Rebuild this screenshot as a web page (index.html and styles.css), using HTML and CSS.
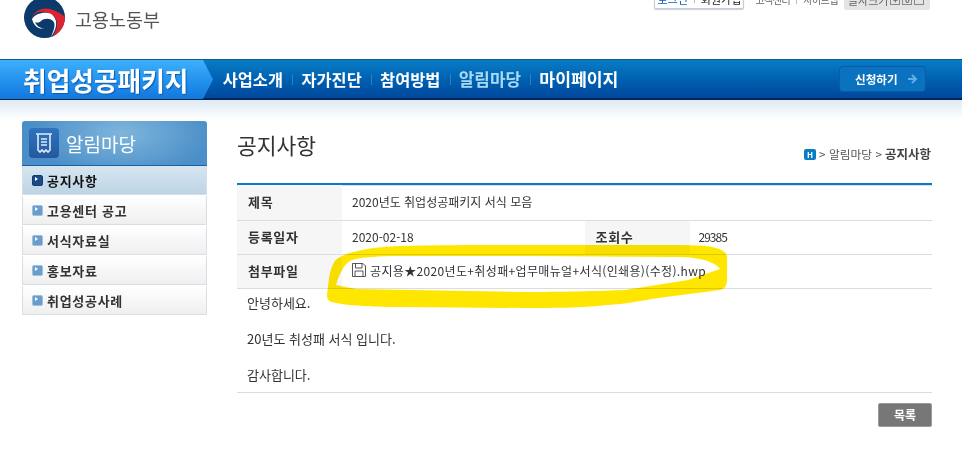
FILE: index.html
```html
<!DOCTYPE html>
<html lang="ko">
<head>
    <meta charset="UTF-8">
    <meta name="viewport" content="width=device-width, initial-scale=1.0">
    <title>공지사항 - 취업성공패키지</title>
    <link rel="stylesheet" href="styles.css">
</head>
<body>
    <header class="top">
        <div class="logo">
            <svg class="logo-mark" width="50" height="42" viewBox="0 0 50 42">
                <circle cx="24.5" cy="17.5" r="20.5" fill="#0b3a6b"/>
                <path d="M11.5 18C14 11 22 7 30 9C37 11 42 14 45 17C45 26 40 33 32 37C37 31 38 24 36 19C33 13 25 11 19 12C15 13 13 15 11.5 18Z" fill="#e0222f"/>
                <path d="M12 19C15 14 22 12 28 13C34 14 37 20 36 26C35 31 33 34 31 37C34 30 36 24 33 21C30 18 24 18 21 21C19 23 16 23 15 22C17 27 22 29 25 28C20 30 14 27 12 19Z" fill="#fff"/>
            </svg>
            <span class="logo-text">고용노동부</span>
        </div>
        <div class="util">
            <div class="login-box"><a class="login" href="#">로그인</a><i></i><a href="#">회원가입</a></div>
            <div class="util-links"><a href="#">고객센터</a><i></i><a href="#">사이트맵</a></div>
            <div class="font-size">글자크기 <b>+</b><b>0</b><b>-</b></div>
        </div>
    </header>

    <div class="gnb">
        <div class="brand">취업성공패키지</div>
        <ul class="menu">
            <li>사업소개</li>
            <li>자가진단</li>
            <li>참여방법</li>
            <li class="on">알림마당</li>
            <li class="mypage">마이페이지</li>
        </ul>
        <a class="apply" href="#">신청하기
            <svg width="10" height="12" viewBox="0 0 10 12"><path d="M0 6H8M4 2L8 6L4 10" fill="none" stroke="#5fb0e4" stroke-width="2"/></svg>
        </a>
    </div>

    <div class="content">
        <aside class="side">
            <div class="side-title">
                <span class="side-icon">
                    <svg width="20" height="22" viewBox="0 0 20 22">
                        <path d="M2 2H18M4 2V18L6 20L8 18L10 20L12 18L14 20L16 18V2M7 7H13M7 10H13M7 13H13" fill="none" stroke="#dcebf8" stroke-width="1.6"/>
                    </svg>
                </span>
                <span>알림마당</span>
            </div>
            <ul class="side-menu">
                <li class="on">공지사항</li>
                <li>고용센터 공고</li>
                <li>서식자료실</li>
                <li>홍보자료</li>
                <li>취업성공사례</li>
            </ul>
        </aside>

        <main class="main">
            <div class="title-row">
                <h2>공지사항</h2>
                <div class="path"><span class="home">H</span> &gt; 알림마당 &gt; <strong>공지사항</strong></div>
            </div>
            <table class="view">
                <colgroup>
                    <col class="col-th">
                    <col class="col-td">
                    <col class="col-th">
                    <col class="col-td">
                </colgroup>
                <tr class="first">
                    <th>제목</th>
                    <td colspan="3">2020년도 취업성공패키지 서식 모음</td>
                </tr>
                <tr>
                    <th>등록일자</th>
                    <td>2020-02-18</td>
                    <th>조회수</th>
                    <td class="hit">29385</td>
                </tr>
                <tr>
                    <th>첨부파일</th>
                    <td colspan="3">
                        <span class="file">
                            <svg width="14" height="14" viewBox="0 0 14 14">
                                <path d="M.5.5H11L13.5 3V13.5H.5ZM3.5.5V5H10V.5M3 13.5V8H11V13.5" fill="#fff" stroke="#555"/>
                            </svg>
                            공지용★2020년도+취성패+업무매뉴얼+서식(인쇄용)(수정).hwp
                        </span>
                    </td>
                </tr>
            </table>
            <div class="body-text">
                <p>안녕하세요.</p>
                <p>20년도 취성패 서식 입니다.</p>
                <p>감사합니다.</p>
            </div>
            <div class="btn-row">
                <a class="btn" href="#">목록</a>
            </div>
        </main>
    </div>

    <!-- 형광펜 표시 -->
    <svg class="marker" width="962" height="452" viewBox="0 0 962 452">
        <path fill="#ffe600" fill-rule="evenodd" d="M400 246C440 245 480 245 527 245L658 245C680 245 702 245 712 247C722 249 727 252 727 258L727 280C727 285 725 289 720 290L658 298C640 301 625 304 608 305C580 308 550 308 525 308L400 307C380 307 350 306 336 303C329 302 327 300 327 295L329 278C331 268 333 262 337 259C346 252 370 247 400 246ZM400 256C380 256 362 257 352 260C344 263 339 275 336 285C345 287 352 288 357 289L525 292C560 292 600 291 625 290L688 280L720 269C718 266 716 265 712 263C702 258 690 257 675 257L525 256Z"/>
    </svg>
</body>
</html>
```

FILE: styles.css
```css
* {
    box-sizing: border-box;
}

html, body {
    height: 452px;
    overflow: hidden;
}

body {
    position: relative;
    margin: 0;
    padding: 0;
    background-color: #fff;
    color: #333;
    font-family: "Noto Sans CJK KR", "Noto Sans", sans-serif;
    font-size: 12px;
}

a {
    color: inherit;
    text-decoration: none;
}

ul {
    list-style-type: none;
    margin: 0;
    padding: 0;
}

/* top */
.top {
    display: flex;
    justify-content: space-between;
    height: 59px;
    padding: 0 32px 0 20px;
    overflow: hidden;
}

.logo {
    display: flex;
    align-items: flex-start;
    gap: 5px;
    height: 42px;
}

.logo-text {
    color: #555;
    font-size: 18.5px;
    line-height: 38px;
}

.util {
    display: flex;
    align-items: flex-end;
    height: 10px;
    font-size: 11px;
    line-height: 14px;
    color: #666;
}

.util i {
    width: 1px;
    height: 8px;
    margin: 0 6px;
    background-color: #bbb;
}

.login-box {
    display: flex;
    align-items: center;
    width: 90px;
    height: 20px;
    margin-bottom: 1px;
    justify-content: center;
    background-color: #fff;
    border: 1px solid #c4ccd6;
    border-radius: 2px;
    color: #222;
    box-shadow: 0 1px 1px #ccd;
}

.login {
    color: #0a5fb0;
}

.util-links {
    display: flex;
    align-items: center;
    height: 20px;
    margin: 0 6px 0 11px;
    font-size: 10px;
    letter-spacing: -.5px;
}

.font-size {
    display: flex;
    align-items: center;
    gap: 2px;
    width: 86px;
    height: 20px;
    padding-left: 4px;
    background-color: #e4e4e4;
    border-radius: 2px;
}

.font-size b {
    width: 10px;
    height: 10px;
    border: 1px solid #888;
    font-size: 8px;
    line-height: 8px;
    text-align: center;
}

/* gnb */
.gnb {
    display: flex;
    align-items: center;
    height: 41px;
    padding-right: 36px;
    background: linear-gradient(#0a7cc4, #0064b4 45%, #004a9e 95%);
    border-top: 1px solid #0a5a9c;
    border-bottom: 2px solid #03245a;
}

.brand {
    align-self: stretch;
    width: 213px;
    margin-bottom: -1px;
    padding-left: 23px;
    background: linear-gradient(#3fb0fb, #1f8eec 60%, #1477dc);
    clip-path: polygon(0 0, 203px 0, 213px 50%, 203px 100%, 0 100%);
    color: #fff;
    font-size: 25.7px;
    font-weight: 700;
    line-height: 40px;
    text-shadow: 1px 1px 1px #0c5ab0;
    white-space: nowrap;
}

.menu {
    display: flex;
    flex: 1;
    margin-left: .5px;
    color: #fff;
    font-size: 16.4px;
    font-weight: 700;
}

.menu li {
    position: relative;
    padding: 0 9.2px;
    line-height: 22px;
}

.menu li + li::before {
    content: "";
    position: absolute;
    left: 0;
    top: 6px;
    width: 1px;
    height: 11px;
    background-color: #2f7fbe;
}

.menu .on {
    color: #a9daf4;
    font-size: 16.9px;
}

.menu .mypage {
    font-size: 17.2px;
}

.apply {
    display: flex;
    align-items: center;
    gap: 10px;
    width: 87px;
    height: 26px;
    padding-left: 15px;
    background-color: #0a72bf;
    border: 1px solid #0a5aa8;
    border-radius: 4px;
    color: #fff;
    font-size: 11.6px;
    font-weight: 700;
    white-space: nowrap;
}

/* content */
.content {
    display: flex;
    gap: 30px;
    padding: 21px 30px 0 22px;
    background: linear-gradient(#dfeaf3, #fff 20px) no-repeat;
}

.side {
    width: 185px;
}

.side-title {
    display: flex;
    align-items: center;
    gap: 7px;
    height: 45px;
    padding-left: 7px;
    background: radial-gradient(ellipse 90px 44px at 100px 12px, #7fb5dc, #4a8fc8);
    border-bottom: 1px solid #1c5ea8;
    border-radius: 3px 3px 0 0;
    color: #fff;
    font-size: 19px;
}

.side-icon {
    display: flex;
    align-items: center;
    justify-content: center;
    width: 30px;
    height: 30px;
    background: linear-gradient(#2f73bf, #24599f);
    border-radius: 4px;
}

.side-menu li {
    display: flex;
    align-items: center;
    height: 29px;
    margin-bottom: 1px;
    padding-left: 24px;
    position: relative;
    background: linear-gradient(#fff, #efefef);
    border: 1px solid #d8dee7;
    border-top: 0;
    color: #333;
    font-size: 13px;
    font-weight: 700;
    letter-spacing: .7px;
}

.side-menu li::before {
    content: "";
    position: absolute;
    left: 9px;
    top: 9px;
    width: 9px;
    height: 9px;
    background-color: #6a9ccc;
    border: 1px solid #9cc0de;
    border-radius: 2px;
}

.side-menu li::after {
    content: "";
    position: absolute;
    left: 12px;
    top: 11px;
    border-left: 3px solid #fff;
    border-top: 2.5px solid transparent;
    border-bottom: 2.5px solid transparent;
}

.side-menu .on {
    background: linear-gradient(#d7e6f1, #bcd4e4);
    color: #111;
}

.side-menu .on::before {
    background-color: #1a4a8a;
    border-color: #143c74;
}

.main {
    width: 695px;
}

.title-row {
    display: flex;
    justify-content: space-between;
    height: 62px;
}

h2 {
    margin: 0;
    color: #333;
    font-size: 21.5px;
    font-weight: 400;
    line-height: 47px;
}

.path {
    display: flex;
    align-items: center;
    gap: 3px;
    align-self: flex-end;
    margin-bottom: 21px;
    padding-right: 1px;
    color: #555;
    font-size: 11.75px;
    line-height: 16px;
}

.path strong {
    color: #444;
    font-size: 12.5px;
}

.home {
    width: 12px;
    height: 11px;
    background-color: #0a7bc4;
    border-radius: 2px;
    color: #fff;
    font-size: 8px;
    font-weight: 700;
    line-height: 11px;
    text-align: center;
}

.view {
    width: 100%;
    border-collapse: collapse;
    table-layout: fixed;
    border-top: 2px solid #0a7bc4;
    box-shadow: inset 0 1px 0 #ddd;
}

.col-th {
    width: 105px;
}

.view tr {
    height: 34px;
}

.view .first {
    height: 36px;
}

.view th,
.view td {
    padding: 0 10px 2px;
    border-bottom: 1px solid #ddd;
    font-size: 12px;
    text-align: left;
}

.view th {
    padding-left: 11px;
    background-color: #f6f6f6;
    color: #333;
    font-size: 13px;
    letter-spacing: .7px;
}

.view .hit {
    padding-left: 9px;
    letter-spacing: -1px;
}

.file {
    display: flex;
    align-items: center;
    gap: 4px;
    letter-spacing: .35px;
    white-space: nowrap;
}

.body-text {
    height: 104px;
    padding: 0 10px;
    border-bottom: 1px solid #ddd;
    color: #333;
    font-size: 13px;
    line-height: 28px;
}

.body-text p {
    margin: 0 0 8px;
}

.btn-row {
    display: flex;
    justify-content: flex-end;
    margin-top: 10px;
}

.btn {
    width: 54px;
    height: 24px;
    background-color: #777;
    border: 1px solid #9a9a9a;
    border-radius: 2px;
    color: #fff;
    font-size: 12px;
    font-weight: 700;
    line-height: 21px;
    text-align: center;
}

.marker {
    position: absolute;
    left: 0;
    top: 0;
    mix-blend-mode: multiply;
    pointer-events: none;
}
```
